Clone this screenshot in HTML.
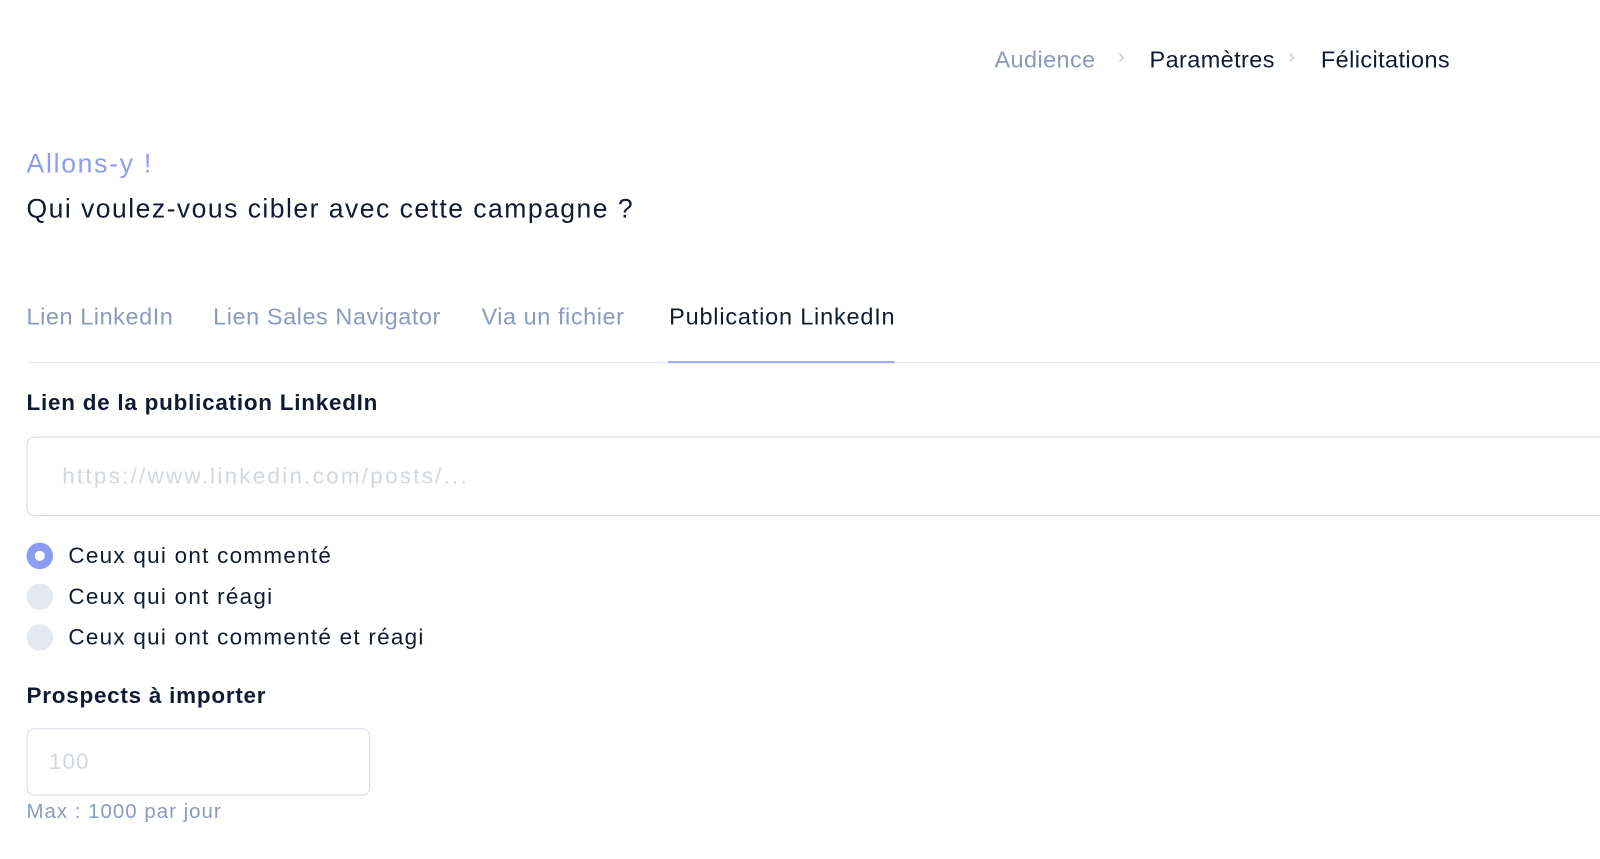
<!DOCTYPE html>
<html><head><meta charset="utf-8"><style>
*{margin:0;padding:0;box-sizing:border-box}
body{width:1600px;height:842px;background:#fff;font-family:"Liberation Sans",sans-serif;color:#111a33;position:relative;overflow:hidden}
#w{position:absolute;left:0;top:0;width:1600px;height:842px;transform:scale(1.02);transform-origin:0 0}
.a{position:absolute;white-space:nowrap}
.bc{top:45px;font-size:23px;letter-spacing:0.4px}
.chev{color:#c5cbd8;font-size:20px;top:45px}
.tab{top:297px;font-size:23px;color:#8a9bbf;letter-spacing:0.55px}
.radio{position:absolute;left:26px;width:26px;height:26px;border-radius:50%;background:#e4e8f3}
.rl{left:67px;font-size:22px;letter-spacing:1.25px}
</style></head><body><div id="w">
<div class="a bc" style="left:975px;color:#8a9bbf">Audience</div>
<div class="a chev" style="left:1096px">›</div>
<div class="a bc" style="left:1127px">Paramètres</div>
<div class="a chev" style="left:1263px">›</div>
<div class="a bc" style="left:1295px">Félicitations</div>
<div class="a" style="left:26px;top:145px;font-size:26px;color:#8c9cf2;letter-spacing:1.7px">Allons-y !</div>
<div class="a" style="left:26px;top:189px;font-size:26px;letter-spacing:1.45px">Qui voulez-vous cibler avec cette campagne ?</div>
<div class="a tab" style="left:26px">Lien LinkedIn</div>
<div class="a tab" style="left:209px">Lien Sales Navigator</div>
<div class="a tab" style="left:472px">Via un fichier</div>
<div class="a tab" style="left:656px;color:#111a33;letter-spacing:0.8px">Publication LinkedIn</div>
<div class="a" style="left:26px;top:355px;width:1574px;height:1px;background:#e3e6ee"></div>
<div class="a" style="left:655px;top:354px;width:222px;height:2px;background:#9aa7ec"></div>
<div class="a" style="left:26px;top:382px;font-size:22px;font-weight:bold;letter-spacing:0.75px">Lien de la publication LinkedIn</div>
<div class="a" style="left:26px;top:428px;width:1590px;height:78px;border:1px solid #d5dae5;border-radius:8px"></div>
<div class="a" style="left:61px;top:454px;font-size:22px;color:#d3d7e0;letter-spacing:2.2px">https://www.linkedin.com/posts/...</div>
<div class="radio" style="top:532px;background:#8c9cf2"><div style="position:absolute;left:8px;top:8px;width:10px;height:10px;border-radius:50%;background:#fff"></div></div>
<div class="a rl" style="top:532px">Ceux qui ont commenté</div>
<div class="radio" style="top:572px"></div>
<div class="a rl" style="top:572px">Ceux qui ont réagi</div>
<div class="radio" style="top:612px"></div>
<div class="a rl" style="top:612px">Ceux qui ont commenté et réagi</div>
<div class="a" style="left:26px;top:669px;font-size:22px;font-weight:bold;letter-spacing:0.75px">Prospects à importer</div>
<div class="a" style="left:26px;top:714px;width:337px;height:66px;border:1px solid #d5dae5;border-radius:8px"></div>
<div class="a" style="left:48px;top:734px;font-size:22px;color:#d3d7e0;letter-spacing:1px">100</div>
<div class="a" style="left:26px;top:785px;font-size:20px;color:#8a9bbf;letter-spacing:1px">Max : 1000 par jour</div>
</div></body></html>
